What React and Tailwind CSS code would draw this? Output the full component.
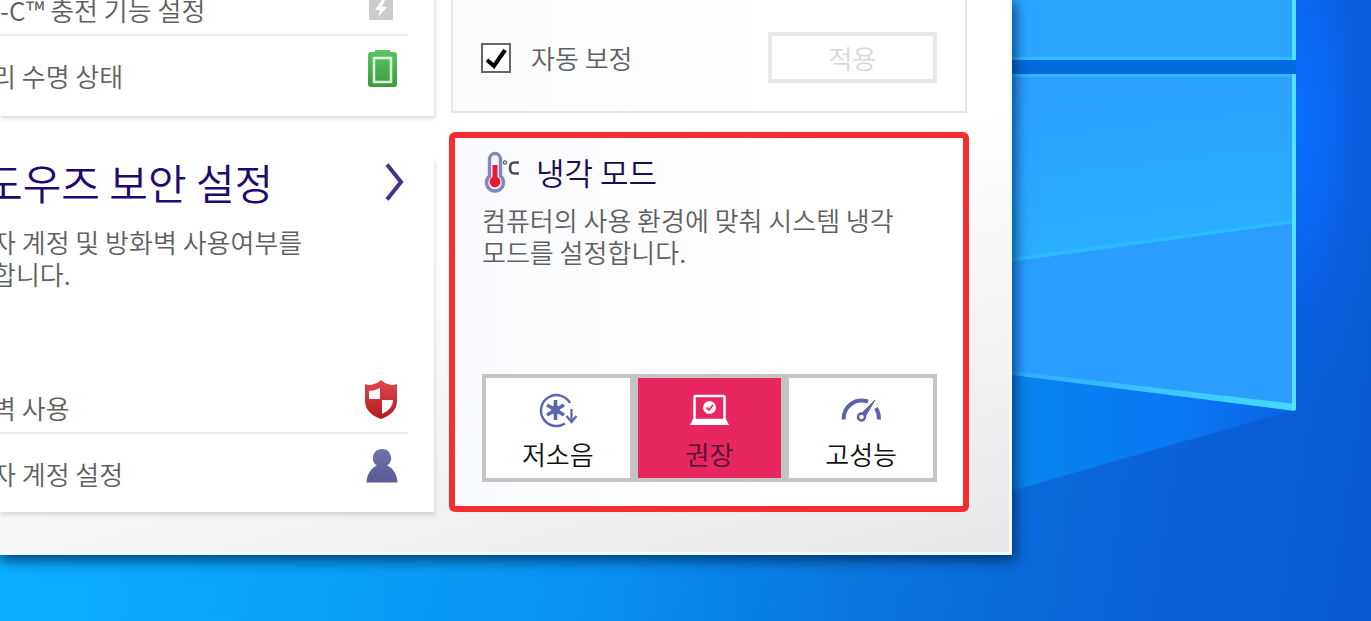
import React, { useState } from 'react';

const Wallpaper = () => (
  <svg
    className="absolute inset-0 w-full h-full"
    viewBox="0 0 1371 621"
    preserveAspectRatio="none"
    aria-hidden="true"
  >
    <defs>
      <linearGradient id="base" gradientUnits="userSpaceOnUse" x1="0" y1="560" x2="1340" y2="760">
        <stop offset="0" stopColor="#0baeff" />
        <stop offset="0.25" stopColor="#0aa0f8" />
        <stop offset="0.45" stopColor="#0890f0" />
        <stop offset="0.62" stopColor="#0a76de" />
        <stop offset="0.8" stopColor="#0a66da" />
        <stop offset="1" stopColor="#0a58d2" />
      </linearGradient>
      <radialGradient id="glow" gradientUnits="userSpaceOnUse" cx="1290" cy="120" r="320" gradientTransform="translate(1290 120) scale(0.34 1) translate(-1290 -120)">
        <stop offset="0" stopColor="#0a70ff" />
        <stop offset="0.4" stopColor="#0a68f4" stopOpacity="0.9" />
        <stop offset="1" stopColor="#0a58d8" stopOpacity="0" />
      </radialGradient>
      <linearGradient id="beam" x1="0" y1="0" x2="1" y2="0">
        <stop offset="0" stopColor="#0787ee" />
        <stop offset="0.6" stopColor="#0a78f4" />
        <stop offset="1" stopColor="#0a64e4" />
      </linearGradient>
      <linearGradient id="upper" x1="0" y1="0" x2="0.2" y2="1">
        <stop offset="0" stopColor="#2b9efe" />
        <stop offset="1" stopColor="#2aafff" />
      </linearGradient>
      <linearGradient id="edge" x1="0" y1="0" x2="1" y2="0">
        <stop offset="0" stopColor="#2ba8fc" />
        <stop offset="1" stopColor="#45dcff" />
      </linearGradient>
    </defs>
    <rect width="1371" height="621" fill="url(#base)" />
    <rect x="1000" width="371" height="440" fill="url(#glow)" />
    <polygon points="980,360 1295,410 1160,448 980,500" fill="url(#beam)" />
    <rect x="980" y="60" width="316" height="15" fill="#046adf" />
    <rect x="980" width="315" height="60" fill="#2ba6ff" />
    <rect x="980" y="57" width="315" height="3" fill="#38b8ff" />
    <polygon points="980,74 1295,74 1295,410 980,369" fill="#2b9dff" />
    <polygon points="980,74 1295,74 1295,221 980,264" fill="url(#upper)" />
    <polygon points="980,262 1295,220 1295,223 980,266" fill="#2bbcff" />
    <rect x="980" y="74" width="315" height="3" fill="#38b4ff" />
    <polygon points="980,367 1012,371 1295,404 1295,411 980,371" fill="url(#edge)" />
    <rect x="1292" y="0" width="4" height="60" fill="#50e4ff" />
    <rect x="1292" y="74" width="4" height="336" fill="#50e4ff" />
  </svg>
);

const ChargeIcon = () => (
  <svg viewBox="0 0 36 40" className="w-9 h-10">
    <rect x="5" y="2" width="24" height="36" rx="1" fill="#cbcbce" />
    <path d="M18 18 11 28h5l-2 7 9-10h-5l3-7z" fill="#fff" />
  </svg>
);

const BatteryIcon = () => (
  <svg viewBox="0 0 36 40" className="w-9 h-10">
    <defs>
      <linearGradient id="battery" x1="0" y1="0" x2="0" y2="1">
        <stop offset="0" stopColor="#5cc463" />
        <stop offset="1" stopColor="#3b9a40" />
      </linearGradient>
    </defs>
    <path d="M11 2h15v2h4q3 0 3 3v29q0 3-3 3H7q-3 0-3-3V7q0-3 3-3h4z" fill="url(#battery)" />
    <rect x="10" y="10" width="17" height="24" fill="none" stroke="#dcf7d8" strokeWidth="2.5" />
  </svg>
);

const ShieldIcon = () => (
  <svg viewBox="0 0 36 40" className="w-9 h-10">
    <defs>
      <linearGradient id="shield" x1="0" y1="0" x2="0" y2="1">
        <stop offset="0" stopColor="#e2474a" />
        <stop offset="1" stopColor="#b01c22" />
      </linearGradient>
    </defs>
    <path d="M1 4q5 2 9 0 4-1 7-4 3 3 7 4 4 2 9 0v17q0 12-16 18Q1 33 1 21z" fill="url(#shield)" />
    <path d="M5 11q6 0 11-3v11H5z" fill="#fff" />
    <path d="M18 20h11q0 9-11 14z" fill="#fff" />
  </svg>
);

const UserIcon = () => (
  <svg viewBox="0 0 36 40" className="w-9 h-10">
    <defs>
      <linearGradient id="user" x1="0" y1="0" x2="0" y2="1">
        <stop offset="0" stopColor="#7072a8" />
        <stop offset="1" stopColor="#5a5a94" />
      </linearGradient>
    </defs>
    <path d="M18 3a9 9 0 0 1 5 16.500C29 22 33 28 33.500 36.500h-31C3 28 7 22 13 19.500A9 9 0 0 1 18 3z" fill="url(#user)" />
  </svg>
);

const ThermometerIcon = () => (
  <svg viewBox="0 0 38 42" className="w-[38px] h-[42px] shrink-0" aria-hidden="true">
    <path d="M7.500 8a5.500 5.500 0 0 1 11 0v17a8.500 8.500 0 1 1-11 0z" fill="#f4f4ff" stroke="#8186bf" strokeWidth="3.400" />
    <path d="M10.500 14h5v12a5.500 5.500 0 1 1-5 0z" fill="#e81c30" />
    <circle cx="23" cy="11.500" r="1.600" fill="none" stroke="#555" strokeWidth="1.200" />
    <path d="M37 11.500h-4.500q-4.500 0-4.500 5.500t4.500 5.500H37" fill="none" stroke="#4c4c50" strokeWidth="2.600" />
  </svg>
);

const QuietIcon = () => (
  <svg viewBox="0 0 40 36" className="w-10 h-9" fill="none" stroke="#5c66b0">
    <path d="M32 11A15.500 15.500 0 1 0 27 31.500" strokeWidth="2.500" />
    <g strokeWidth="3.600">
      <path d="M17.500 8v20M9 13l17 10M26 13 9 23" />
    </g>
    <circle cx="17.500" cy="18" r="4.500" fill="#5c66b0" stroke="none" />
    <path d="M33.500 17v12M28.500 24l5 6 5-6" strokeWidth="2.200" />
    <path d="m30 27 3.500 4 3.500-4z" fill="#5c66b0" stroke="none" />
  </svg>
);

const LaptopIcon = () => (
  <svg viewBox="0 0 40 36" className="w-10 h-9">
    <rect x="5.500" y="4" width="30" height="24" rx="1" fill="none" stroke="#fff" strokeWidth="2.500" />
    <path d="M4 27h33l3 6H1z" fill="#fff" />
    <circle cx="20.500" cy="15.500" r="6.500" fill="#fff" />
    <path d="m17.500 15.500 2.500 2.500 4-5" fill="none" stroke="#e8265f" strokeWidth="1.800" />
  </svg>
);

const GaugeIcon = () => (
  <svg viewBox="0 0 40 36" className="w-10 h-9" fill="none" stroke="#5c63a8">
    <path d="M2.500 27.500C2.500 15 13 5.500 27 9.500" strokeWidth="4" />
    <path d="M35 16q3 5 3 11.500" strokeWidth="4" />
    <circle cx="20.500" cy="25" r="3.500" strokeWidth="2.500" />
    <path d="M21.500 20.500 34 8 24.500 24z" fill="#5c63a8" strokeWidth="1" />
  </svg>
);

const SettingRow = ({ label, icon, last, flush }) => (
  <li className={last ? '' : 'border-b-2 border-[#ececee]'}>
    <a href="#" className="flex items-start justify-between h-16 pr-2">
      <span className={`pt-6 whitespace-nowrap ${flush ? 'pl-0' : '-ml-2'}`}>{label}</span>
      <span className="pt-3">{icon}</span>
    </a>
  </li>
);

const modes = [
  { id: 'quiet', label: '저소음', icon: <QuietIcon /> },
  { id: 'recommended', label: '권장', icon: <LaptopIcon /> },
  { id: 'performance', label: '고성능', icon: <GaugeIcon /> },
];

const App = () => {
  const [mode, setMode] = useState('recommended');
  const [autoCorrect, setAutoCorrect] = useState(true);

  return (
    <div className="relative flex min-h-screen overflow-hidden pr-[359px] pb-[66px] font-['Noto_Sans_CJK_KR','Noto_Sans',sans-serif] font-[350] text-[26px] leading-8 text-[#606060]">
      <Wallpaper />

      <main className="relative flex flex-1 gap-[15px] border-r-3 border-b-3 border-[#f0fbff] bg-linear-165 from-white from-45% to-[#e6e7e8] pr-10 pb-10 shadow-[2px_4px_12px_2px_rgba(0,40,90,0.75)]">
        <div className="flex flex-1 flex-col justify-between">
          <section className="-mt-[30px] bg-white pr-[26px] pb-4 shadow-[1px_2px_4px_rgba(90,100,120,0.25)]">
            <ul>
              <SettingRow label="-C™ 충전 기능 설정" icon={<ChargeIcon />} flush />
              <SettingRow label="리 수명 상태" icon={<BatteryIcon />} last />
            </ul>
          </section>

          <section className="bg-white pr-[26px] pb-[14px] shadow-[1px_3px_4px_rgba(90,100,120,0.2)]">
            <div className="flex items-center justify-between">
              <h2 className="-ml-4 text-[42px] leading-12 text-[#22086e]">도우즈 보안 설정</h2>
              <button type="button" aria-label="열기" className="pr-1">
                <svg viewBox="0 0 20 38" className="w-5 h-[38px]" fill="none" stroke="#46308c" strokeWidth="4">
                  <path d="M3 1.500 17 19 3 36.500" />
                </svg>
              </button>
            </div>
            <p className="-ml-2 mt-5">
              자 계정 및 방화벽 사용여부를
              <br />
              합니다.
            </p>
            <ul className="mt-[78px]">
              <SettingRow label="벽 사용" icon={<ShieldIcon />} />
              <SettingRow label="자 계정 설정" icon={<UserIcon />} last />
            </ul>
          </section>
        </div>

        <div className="flex w-[520px] flex-col gap-[19px]">
          <section className="mx-0.5 flex items-center justify-between border-2 border-t-0 border-[#e4e6eb] bg-linear-to-r from-[#fafbfd] to-white to-70% pt-8 pr-7 pb-7 pl-7">
            <label className="flex items-center gap-5">
              <span className="relative flex">
                <input
                  type="checkbox"
                  checked={autoCorrect}
                  onChange={(e) => setAutoCorrect(e.target.checked)}
                  className="size-[30px] appearance-none border-2 border-[#666] bg-white"
                />
                {autoCorrect && (
                  <svg viewBox="0 0 30 30" className="pointer-events-none absolute inset-0" fill="none" stroke="#000" strokeWidth="4">
                    <path d="m6 17 7 6L24 7" />
                  </svg>
                )}
              </span>
              자동 보정
            </label>
            <button type="button" disabled className="flex h-[51px] w-[169px] items-center justify-center border-4 border-[#e8e8ea] bg-white text-[#d8d8da]">
              적용
            </button>
          </section>

          <section className="flex flex-1 flex-col justify-between rounded-md border-6 border-[#f52d2f] bg-linear-to-r from-[#f9fafd] to-white to-70% pr-[26px] pl-[27px] pt-3 pb-6">
            <div>
              <div className="flex items-center gap-4">
                <ThermometerIcon />
                <h2 className="text-[31px] leading-11 text-[#1b0b50]">냉각 모드</h2>
              </div>
              <p className="mt-[10px] whitespace-nowrap">
                컴퓨터의 사용 환경에 맞춰 시스템 냉각
                <br />
                모드를 설정합니다.
              </p>
            </div>

            <div className="grid grid-cols-3 gap-2 bg-[#c4c4c4] p-1">
              {modes.map((m) => (
                <button
                  key={m.id}
                  type="button"
                  aria-pressed={mode === m.id}
                  onClick={() => setMode(m.id)}
                  className={`flex h-[100px] flex-col items-center gap-[10px] pt-[14px] ${
                    mode === m.id ? 'bg-[#e8265f] text-[#4a1638]' : 'bg-white text-[#111]'
                  }`}
                >
                  {m.icon}
                  <span>{m.label}</span>
                </button>
              ))}
            </div>
          </section>
        </div>
      </main>
    </div>
  );
};

export default App;
